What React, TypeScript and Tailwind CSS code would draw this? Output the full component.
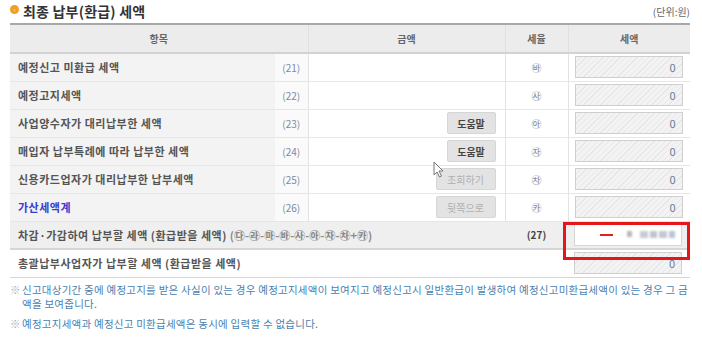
import React from "react";

const font = { fontFamily: '"Noto Sans CJK KR", "Noto Sans", sans-serif' };

const rows = [
  { label: "예정신고 미환급 세액", no: "(21)", mark: "㉳", btn: null },
  { label: "예정고지세액", no: "(22)", mark: "㉴", btn: null },
  { label: "사업양수자가 대리납부한 세액", no: "(23)", mark: "㉵", btn: { text: "도움말", on: true } },
  { label: "매입자 납부특례에 따라 납부한 세액", no: "(24)", mark: "㉶", btn: { text: "도움말", on: true } },
  { label: "신용카드업자가 대리납부한 납부세액", no: "(25)", mark: "㉷", btn: { text: "조회하기", on: false } },
  { label: "가산세액계", no: "(26)", mark: "㉸", btn: { text: "뒷쪽으로", on: false }, blue: true },
];

function TaxBox({ children }: { children?: React.ReactNode }) {
  return (
    <div className="h-[22px] w-[108px] ml-[6px] border border-[#cfcfcf] bg-[image:repeating-linear-gradient(135deg,#f3f3f3_0px,#f3f3f3_3px,#e7e7e7_3px,#e7e7e7_4px)] flex items-center justify-end pr-[6px] text-[11px] text-[#6b7a99]">
      {children ?? "0"}
    </div>
  );
}

export default function App() {
  return (
    <div className="w-[702px] h-[347px] bg-white relative text-[#555]" style={font}>
      <div className="w-[680px] ml-[10px]">
        <div className="h-[23px] flex items-center justify-between">
          <div className="flex items-center gap-[4px]">
            <span className="w-[9px] h-[9px] rounded-full bg-[#f0a020] flex items-center justify-center -mt-[4px]">
              <span className="text-white text-[6px] leading-none">›</span>
            </span>
            <span className="text-[14px] font-bold text-[#333] tracking-[0.2px]">최종 납부(환급) 세액</span>
          </div>
          <span className="text-[10px] text-[#666]">(단위:원)</span>
        </div>
        <div className="h-[2px] bg-[#a8a8a8]" />
        <table className="table-fixed border-collapse w-[680px] text-[11px]">
          <colgroup>
            <col className="w-[265px]" />
            <col className="w-[33px]" />
            <col className="w-[197px]" />
            <col className="w-[63px]" />
            <col className="w-[122px]" />
          </colgroup>
          <thead>
            <tr className="h-[28px] bg-[#ececec] border-b-2 border-[#d2d2d2] text-[10px] font-bold text-[#666]">
              <th colSpan={2} className="border-r border-[#e0e0e0] font-bold">항목</th>
              <th className="border-r border-[#e0e0e0] font-bold">금액</th>
              <th className="border-r border-[#e0e0e0] font-bold">세율</th>
              <th className="font-bold">세액</th>
            </tr>
          </thead>
          <tbody>
            {rows.map((r) => (
              <tr key={r.no} className="h-[28px] border-b border-[#e6e6e6]">
                <td className={`bg-[#f3f3f3] pl-[8px] font-bold text-[11px] tracking-[0.5px] ${r.blue ? "text-[#3b3bd0]" : "text-[#555]"}`}>{r.label}</td>
                <td className="bg-[#fafafa] border-r border-[#e3e3e3] text-center text-[10px] text-[#7a8aa8]">{r.no}</td>
                <td className="bg-white border-r border-[#e3e3e3] pr-[9px]">
                  {r.btn && (
                    <div className="flex justify-end">
                      <span
                        className={`h-[22px] flex items-center justify-center rounded-[2px] bg-[#e3e3e3] border border-[#d6d6d6] text-[10px] ${
                          r.btn.on ? "w-[49px] font-bold text-[#444]" : "w-[60px] text-[#b0b0b0]"
                        }`}
                      >
                        {r.btn.text}
                      </span>
                    </div>
                  )}
                </td>
                <td className="bg-white border-r border-[#e3e3e3] text-center text-[10px] text-[#8a8a8a]">{r.mark}</td>
                <td className="bg-white">
                  <TaxBox />
                </td>
              </tr>
            ))}
            <tr className="h-[28px] bg-[#efefef] border-b-2 border-[#d6d6d6]">
              <td colSpan={3} className="pl-[8px] font-bold text-[11px] tracking-[0.5px] text-[#555] whitespace-nowrap">
                차감·가감하여 납부할 세액 (환급받을 세액) <span className="text-[#8a8a8a] tracking-[0px]">(㉰-㉱-㉲-㉳-㉴-㉵-㉶-㉷+㉸)</span>
              </td>
              <td className="text-center font-bold text-[10px] text-[#444]">(27)</td>
              <td>
                <div className="h-[22px] w-[108px] ml-[6px] border border-[#d6d6d6] bg-white flex items-center">
                  <span className="ml-[25px] w-[13px] h-[2px] bg-[#e52020]" />
                  <span className="ml-[14px] flex gap-[2px] blur-[1px]">
                    <span className="w-[5px] h-[6px] bg-[#b8b8b8]" />
                    <span className="w-[4px] h-[6px] bg-white" />
                    <span className="w-[8px] h-[7px] bg-[#c8ccd4]" />
                    <span className="w-[7px] h-[7px] bg-[#c0c4cc]" />
                    <span className="w-[8px] h-[7px] bg-[#c4c8d0]" />
                    <span className="w-[6px] h-[7px] bg-[#b8c4d8]" />
                  </span>
                </div>
              </td>
            </tr>
            <tr className="h-[28px] bg-white border-b border-[#d6d6d6]">
              <td colSpan={4} className="pl-[8px] font-bold text-[11px] tracking-[0.5px] text-[#555]">
                총괄납부사업자가 납부할 세액 (환급받을 세액)
              </td>
              <td>
                <TaxBox />
              </td>
            </tr>
          </tbody>
        </table>
        <div className="mt-[5px] text-[10.5px] leading-[14px] text-[#4a7fb0] tracking-[0.25px]">
          <div className="flex">
            <span className="text-[#aaa] w-[12px] shrink-0">※</span>
            <span className="break-all">
              신고대상기간 중에 예정고지를 받은 사실이 있는 경우 예정고지세액이 보여지고 예정신고시 일반환급이 발생하여 예정신고미환급세액이 있는 경우 그 금액을 보여줍니다.
            </span>
          </div>
          <div className="flex mt-[6px]">
            <span className="text-[#aaa] w-[12px] shrink-0">※</span>
            <span>예정고지세액과 예정신고 미환급세액은 동시에 입력할 수 없습니다.</span>
          </div>
        </div>
      </div>
      <div className="absolute left-[563px] top-[222px] w-[127px] h-[38px] border-[3px] border-[#e8141c]" />
      <svg className="absolute left-[433px] top-[161px]" width="11" height="17" viewBox="0 0 11 17">
        <path d="M1 1 L1 14 L4 11 L6.5 16 L8.5 15 L6 10 L10 10 Z" fill="white" stroke="#777" strokeWidth="1" />
      </svg>
    </div>
  );
}
